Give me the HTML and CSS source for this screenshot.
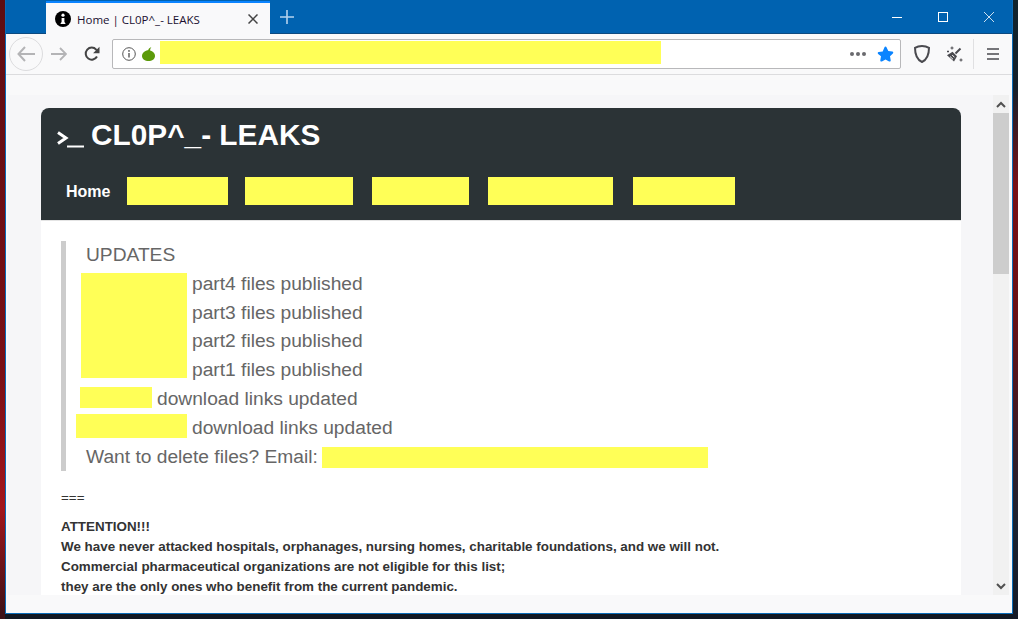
FILE: index.html
```html
<!DOCTYPE html>
<html lang="en">
<head>
  <meta charset="UTF-8" />
  <title>Home | CL0P^_- LEAKS</title>
  <link rel="stylesheet" href="styles.css">
</head>
<body>
  <div class="window">
    <!-- title bar -->
    <div class="titlebar">
      <div class="tab">
        <svg class="tab-icon" width="16" height="16" viewBox="0 0 16 16">
          <circle cx="8" cy="8" r="8" fill="#000"/>
          <circle cx="8" cy="4.2" r="1.6" fill="#fff"/>
          <path d="M6.6 7h2.8v4l1 1.2v.8H5.6v-.8l1-1.2z" fill="#fff"/>
        </svg>
        <span class="tab-title">Home | CL0P^_- LEAKS</span>
        <svg class="tab-close" width="10" height="10" viewBox="0 0 10 10">
          <path d="M0.5 0.5l9 9M9.5 0.5l-9 9" stroke="#444" stroke-width="1.5" fill="none"/>
        </svg>
      </div>
      <svg class="new-tab" width="14" height="14" viewBox="0 0 14 14">
        <path d="M7 0v14M0 7h14" stroke="#b5d3ee" stroke-width="1.6" fill="none"/>
      </svg>
      <div class="win-controls">
        <svg width="10" height="10" viewBox="0 0 10 10"><path d="M0 5.5h10" stroke="#fff" fill="none"/></svg>
        <svg width="10" height="10" viewBox="0 0 10 10"><rect x="0.5" y="0.5" width="9" height="9" stroke="#fff" fill="none"/></svg>
        <svg width="10" height="10" viewBox="0 0 10 10"><path d="M0 0l10 10M10 0L0 10" stroke="#fff" stroke-width="0.8" fill="none"/></svg>
      </div>
    </div>

    <!-- toolbar -->
    <div class="toolbar">
      <div class="back-btn">
        <svg width="18" height="16" viewBox="0 0 18 16"><path d="M8 1L1.5 8 8 15M2 8h16" stroke="#b4b4b6" stroke-width="2" fill="none"/></svg>
      </div>
      <svg class="forward" width="16" height="14" viewBox="0 0 16 14"><path d="M9 1l6 6-6 6M15 7H0" stroke="#b4b4b6" stroke-width="1.8" fill="none"/></svg>
      <svg class="reload" width="16" height="16" viewBox="0 0 16 16">
        <path d="M13 10.5A6 6 0 1 1 12.2 3.6L14.5 6" stroke="#444" stroke-width="2" fill="none"/>
        <path d="M15.5 0.8v6.4H9.1z" fill="#444"/>
      </svg>
      <div class="urlbar">
        <svg class="url-info" width="14" height="14" viewBox="0 0 14 14">
          <circle cx="7" cy="7" r="6.3" stroke="#555" fill="none"/>
          <path d="M7 6v4.5" stroke="#555" stroke-width="1.4"/>
          <circle cx="7" cy="3.9" r="0.9" fill="#555"/>
        </svg>
        <svg class="url-onion" width="13" height="14" viewBox="0 0 13 14">
          <path d="M6.5 3.2C9.8 3.2 13 5.7 13 8.9 13 12 10 14 6.5 14S0 12 0 8.9C0 5.7 3.2 3.2 6.5 3.2z" fill="#5c9a0a"/>
          <path d="M6 4C6.2 2.2 7.4.8 9.4 0 8.600 1 8.100 2.100 8 4z" fill="#5c9a0a"/>
        </svg>
        <span class="redact url-redact"></span>
        <span class="url-dots"><i></i><i></i><i></i></span>
        <svg class="url-star" width="17" height="16" viewBox="0 0 17 16">
          <path d="M8.500 .6c.5 0 .8.300 1 .7l1.800 3.700 4 .6c1 .1 1.300 1.200.6 1.800l-2.900 2.900.7 4c.2.900-.8 1.600-1.600 1.100l-3.600-1.900-3.600 1.900c-.8.500-1.800-.2-1.600-1.100l.7-4L1.100 7.900C.4 7.300.7 6.200 1.700 6.100l4-.6L7.500 1.300c.2-.4.500-.7 1-.7z" fill="#0a84ff"/>
        </svg>
      </div>
      <svg class="shield" width="16" height="18" viewBox="0 0 16 18">
        <path d="M8 1C10 1 13 1.600 15 2.800 15 9 13.500 14.500 8 17 2.500 14.500 1 9 1 2.800 3 1.600 6 1 8 1z" stroke="#4a4a4f" stroke-width="2" fill="none"/>
      </svg>
      <svg class="broom" width="17" height="17" viewBox="0 0 17 17">
        <path d="M14.500 2.500L9.500 7.500" stroke="#4a4a4f" stroke-width="2" fill="none"/>
        <path d="M6.500 5.800L11 10.300 8 15.500 1 9.200z" fill="#4a4a4f"/>
        <path d="M4 10.500l3 2.800M6.200 9l2.200 2.300" stroke="#f9f9fa" fill="none"/>
        <path d="M6 0.500v3M4.500 2h3M15 12.500v3M13.500 14h3M2 4.500v2M1 5.500h2" stroke="#4a4a4f" fill="none"/>
      </svg>
      <span class="tool-sep"></span>
      <svg class="hamburger" width="12" height="12" viewBox="0 0 12 12">
        <path d="M0 1h12M0 6h12M0 11h12" stroke="#4a4a4f" stroke-width="1.6" fill="none"/>
      </svg>
    </div>

    <!-- page -->
    <div class="viewport">
      <div class="page">
        <div class="card">
          <header class="site-header">
            <div class="site-title">
              <svg class="prompt" width="27" height="17" viewBox="0 0 27 17">
                <path d="M1 1.500l8 5.500-8 5.500" stroke="#fff" stroke-width="3" fill="none"/>
                <path d="M10 15.500h17" stroke="#fff" stroke-width="2" fill="none"/>
              </svg>
              <h1>CL0P^_- LEAKS</h1>
            </div>
            <nav class="menu">
              <a href="#">Home</a>
              <span class="redact nav-1"></span>
              <span class="redact nav-2"></span>
              <span class="redact nav-3"></span>
              <span class="redact nav-4"></span>
              <span class="redact nav-5"></span>
            </nav>
          </header>
          <main class="content">
            <blockquote class="updates">
              <div class="line indent">UPDATES</div>
              <div class="parts">
                <span class="redact parts-redact"></span>
                <div class="parts-list">
                  <div class="line">part4 files published</div>
                  <div class="line">part3 files published</div>
                  <div class="line">part2 files published</div>
                  <div class="line">part1 files published</div>
                </div>
              </div>
              <div class="line row">
                <span class="redact date-short"></span>
                <span>download links updated</span>
              </div>
              <div class="line row">
                <span class="redact date-long"></span>
                <span>download links updated</span>
              </div>
              <div class="line row indent">
                <span>Want to delete files? Email:</span>
                <span class="redact email"></span>
              </div>
            </blockquote>
            <p class="sep">===</p>
            <p class="notice">
              ATTENTION!!!<br>
              We have never attacked hospitals, orphanages, nursing homes, charitable foundations, and we will not.<br>
              Commercial pharmaceutical organizations are not eligible for this list;<br>
              they are the only ones who benefit from the current pandemic.
            </p>
          </main>
        </div>
      </div>
      <div class="scrollbar">
        <div class="scroll-btn">
          <svg width="10" height="7" viewBox="0 0 10 7"><path d="M1 6l4-4 4 4" stroke="#505050" stroke-width="2" fill="none"/></svg>
        </div>
        <div class="scroll-thumb"></div>
        <div class="scroll-track"></div>
        <div class="scroll-btn">
          <svg width="10" height="7" viewBox="0 0 10 7"><path d="M1 1l4 4 4-4" stroke="#505050" stroke-width="2" fill="none"/></svg>
        </div>
      </div>
    </div>
  </div>
</body>
</html>
```

FILE: styles.css
```css
:root {
  --blue: #0062b0;
  --chrome: #f9f9fa;
  --page-bg: #f6f6f8;
  --dark: #2b3336;
  --yellow: #ffff57;
}

html, body {
  height: 100%;
}

body {
  margin: 0;
  width: 1018px;
  height: 619px;
  overflow: hidden;
  box-sizing: border-box;
  padding: 0 5px 5px;
  font-family: "Liberation Sans", Arial, sans-serif;
  background:
    linear-gradient(to bottom, #5e0d12 0, #7a1016 60%, #a3161c 82%, #3a1218 100%) left top / 5px 100% no-repeat,
    linear-gradient(to bottom, #10242e 0, #14202a 14%, #7a1016 30%, #6a0f14 50%, #1a2230 85%, #141a26 100%) right top / 5px 100% no-repeat,
    #121822;
}

.redact {
  display: block;
  background: var(--yellow);
  flex: none;
}

/* ----- window ----- */
.window {
  height: 100%;
  box-sizing: border-box;
  border: 1px solid #0a6cb8;
  border-top: none;
  display: flex;
  flex-direction: column;
  background: var(--chrome);
}

.titlebar {
  height: 33px;
  flex: none;
  display: flex;
  align-items: flex-start;
  background: var(--blue);
  border-bottom: 1px solid #0c4a80;
  padding-left: 40px;
}

.tab {
  width: 224px;
  height: 34px;
  box-sizing: border-box;
  margin-top: 1px;
  border-top: 2px solid #0a84ff;
  background: var(--chrome);
  display: flex;
  align-items: center;
  padding: 0 12px 0 9px;
}

.tab-icon {
  margin-right: 6px;
}

.tab-title {
  flex: 1;
  font-family: "Open Sans", sans-serif;
  font-size: 11.5px;
  color: #1a1030;
  white-space: nowrap;
}

.new-tab {
  margin: 10px 0 0 10px;
}

.win-controls {
  margin-left: auto;
  margin-right: 18px;
  margin-top: 12px;
  display: flex;
  gap: 36px;
}

.toolbar {
  height: 40px;
  flex: none;
  display: flex;
  align-items: center;
  padding-left: 3px;
  border-bottom: 1px solid #dcdcde;
  background: var(--chrome);
}

.back-btn {
  width: 32px;
  height: 32px;
  border: 1px solid #dcdcde;
  border-radius: 50%;
  display: flex;
  align-items: center;
  justify-content: center;
}

.forward {
  margin-left: 8px;
}

.reload {
  margin-left: 17px;
}

.urlbar {
  width: 789px;
  height: 30px;
  box-sizing: border-box;
  margin-left: 12px;
  background: #fff;
  border: 1px solid #b8b8ba;
  border-radius: 2px;
  display: flex;
  align-items: center;
}

.url-info {
  margin-left: 9px;
}

.url-onion {
  margin-left: 6px;
}

.url-redact {
  width: 501px;
  height: 23px;
  margin: -3px 0 0 5px;
}

.url-dots {
  margin-left: auto;
  display: flex;
  gap: 2px;
}

.url-dots i {
  width: 4px;
  height: 4px;
  border-radius: 50%;
  background: #6a6a6e;
}

.url-star {
  margin: 0 6px 0 11px;
}

.shield {
  margin-left: 13px;
}

.broom {
  margin-left: 16px;
}

.tool-sep {
  width: 1px;
  height: 30px;
  margin-left: 10px;
  background: #e0e0e2;
}

.hamburger {
  margin-left: 13px;
}

/* ----- page ----- */
.viewport {
  flex: 1;
  min-height: 0;
  display: flex;
  padding: 20px 3px 18px 2px;
}

.page {
  flex: 1;
  min-width: 0;
  overflow: hidden;
  background: var(--page-bg);
  padding: 13px 32px 0 33px;
}

.card {
  border-radius: 8px 8px 0 0;
  overflow: hidden;
  background: #fff;
}

.site-header {
  background: var(--dark);
  height: 112px;
  border-bottom: 1px solid #e4e4e4;
}

.site-title {
  display: flex;
  align-items: flex-end;
  height: 40px;
  padding: 0 0 0 16px;
}

.prompt {
  margin: 0 7px 0 0;
}

h1 {
  margin: 0 0 -4px;
  font-size: 29.8px;
  line-height: 34px;
  color: #fff;
}

.menu {
  display: flex;
  align-items: center;
  padding: 29px 0 0 25px;
}

.menu a {
  color: #fff;
  font-weight: bold;
  font-size: 16px;
  line-height: 18px;
  margin-top: 2px;
  text-decoration: none;
}

.nav-1, .nav-2, .nav-3, .nav-4, .nav-5 {
  height: 28px;
}

.nav-1 { width: 101px; margin-left: 17px; }
.nav-2 { width: 108px; margin-left: 17px; }
.nav-3 { width: 97px; margin-left: 19px; }
.nav-4 { width: 125px; margin-left: 19px; }
.nav-5 { width: 102px; margin-left: 20px; }

.content {
  padding: 20px 20px 0;
  color: #333;
}

.updates {
  margin: 0;
  border-left: 5px solid #ccc;
  font-size: 19.2px;
  line-height: 28.8px;
  color: #666;
}

.line {
  height: 28.8px;
  white-space: nowrap;
}

.indent {
  padding-left: 20px;
}

.row {
  display: flex;
  align-items: center;
}

.parts {
  display: flex;
  align-items: center;
}

.parts-redact {
  width: 106px;
  height: 105px;
  margin: -4px 5px 0 15px;
}

.date-short {
  width: 72px;
  height: 21px;
  margin: -4px 5px 0 14px;
}

.date-long {
  width: 111px;
  height: 24px;
  margin: -4px 5px 0 10px;
}

.email {
  width: 386px;
  height: 21px;
  margin: 2px 0 0 4px;
}

.sep {
  margin: 17px 0 0;
  font-size: 13.4px;
  line-height: 20px;
}

.notice {
  margin: 9px 0 0;
  font-size: 13.4px;
  line-height: 20px;
  font-weight: bold;
  white-space: nowrap;
}

/* ----- scrollbar ----- */
.scrollbar {
  width: 16px;
  flex: none;
  display: flex;
  flex-direction: column;
  background: #f1f1f1;
}

.scroll-btn {
  height: 18px;
  flex: none;
  display: flex;
  align-items: center;
  justify-content: center;
}

.scroll-thumb {
  height: 161px;
  flex: none;
  background: #cdcdcd;
}

.scroll-track {
  flex: 1;
}
```
